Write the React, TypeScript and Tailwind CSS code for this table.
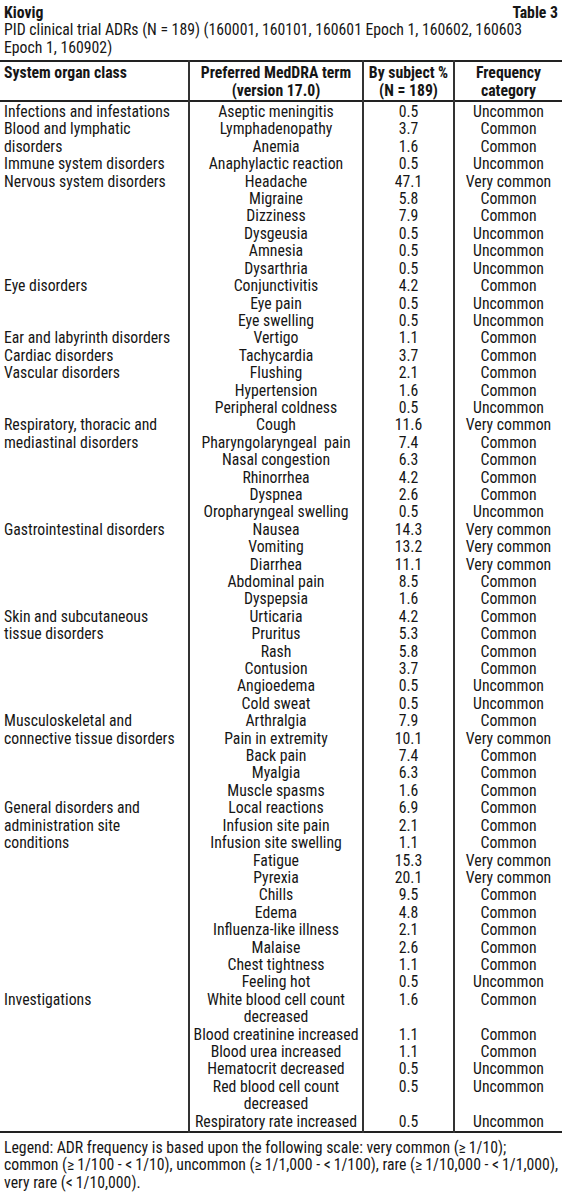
type Term = { term: string[]; pct: string; freq: string };
type Group = { soc: string[]; terms: Term[] };

const C = "Common";
const U = "Uncommon";
const V = "Very common";

const t = (term: string | string[], pct: string, freq: string): Term => ({
  term: Array.isArray(term) ? term : [term],
  pct,
  freq,
});

const groups: Group[] = [
  { soc: ["Infections and infestations"], terms: [t("Aseptic meningitis", "0.5", U)] },
  {
    soc: ["Blood and lymphatic", "disorders"],
    terms: [t("Lymphadenopathy", "3.7", C), t("Anemia", "1.6", C)],
  },
  { soc: ["Immune system disorders"], terms: [t("Anaphylactic reaction", "0.5", U)] },
  {
    soc: ["Nervous system disorders"],
    terms: [
      t("Headache", "47.1", V),
      t("Migraine", "5.8", C),
      t("Dizziness", "7.9", C),
      t("Dysgeusia", "0.5", U),
      t("Amnesia", "0.5", U),
      t("Dysarthria", "0.5", U),
    ],
  },
  {
    soc: ["Eye disorders"],
    terms: [t("Conjunctivitis", "4.2", C), t("Eye pain", "0.5", U), t("Eye swelling", "0.5", U)],
  },
  { soc: ["Ear and labyrinth disorders"], terms: [t("Vertigo", "1.1", C)] },
  { soc: ["Cardiac disorders"], terms: [t("Tachycardia", "3.7", C)] },
  {
    soc: ["Vascular disorders"],
    terms: [t("Flushing", "2.1", C), t("Hypertension", "1.6", C), t("Peripheral coldness", "0.5", U)],
  },
  {
    soc: ["Respiratory, thoracic and", "mediastinal disorders"],
    terms: [
      t("Cough", "11.6", V),
      t("Pharyngolaryngeal\u00a0 pain", "7.4", C),
      t("Nasal congestion", "6.3", C),
      t("Rhinorrhea", "4.2", C),
      t("Dyspnea", "2.6", C),
      t("Oropharyngeal swelling", "0.5", U),
    ],
  },
  {
    soc: ["Gastrointestinal disorders"],
    terms: [
      t("Nausea", "14.3", V),
      t("Vomiting", "13.2", V),
      t("Diarrhea", "11.1", V),
      t("Abdominal pain", "8.5", C),
      t("Dyspepsia", "1.6", C),
    ],
  },
  {
    soc: ["Skin and subcutaneous", "tissue disorders"],
    terms: [
      t("Urticaria", "4.2", C),
      t("Pruritus", "5.3", C),
      t("Rash", "5.8", C),
      t("Contusion", "3.7", C),
      t("Angioedema", "0.5", U),
      t("Cold sweat", "0.5", U),
    ],
  },
  {
    soc: ["Musculoskeletal and", "connective tissue disorders"],
    terms: [
      t("Arthralgia", "7.9", C),
      t("Pain in extremity", "10.1", V),
      t("Back pain", "7.4", C),
      t("Myalgia", "6.3", C),
      t("Muscle spasms", "1.6", C),
    ],
  },
  {
    soc: ["General disorders and", "administration site", "conditions"],
    terms: [
      t("Local reactions", "6.9", C),
      t("Infusion site pain", "2.1", C),
      t("Infusion site swelling", "1.1", C),
      t("Fatigue", "15.3", V),
      t("Pyrexia", "20.1", V),
      t("Chills", "9.5", C),
      t("Edema", "4.8", C),
      t("Influenza-like illness", "2.1", C),
      t("Malaise", "2.6", C),
      t("Chest tightness", "1.1", C),
      t("Feeling hot", "0.5", U),
    ],
  },
  {
    soc: ["Investigations"],
    terms: [
      t(["White blood cell count", "decreased"], "1.6", C),
      t("Blood creatinine increased", "1.1", C),
      t("Blood urea increased", "1.1", C),
      t("Hematocrit decreased", "0.5", U),
      t(["Red blood cell count", "decreased"], "0.5", U),
      t("Respiratory rate increased", "0.5", U),
    ],
  },
];

function Lines({ lines }: { lines: string[] }) {
  return (
    <>
      {lines.map((line) => (
        <div key={line} className="whitespace-nowrap">
          {line}
        </div>
      ))}
    </>
  );
}

export default function App() {
  return (
    <div className="w-[562px] bg-white pt-[4px] font-['Roboto_Condensed','Roboto',sans-serif] text-[15.75px] leading-[17.4px] text-[#161616]">
      <div className="px-[4px]">
        <div className="flex items-center justify-between font-bold">
          <span>Kiovig</span>
          <span>Table 3</span>
        </div>
        <div className="whitespace-nowrap">
          PID clinical trial ADRs (N = 189) (160001, 160101, 160601 Epoch 1, 160602, 160603
        </div>
        <div>Epoch 1, 160902)</div>
      </div>

      <table className="mt-[4px] w-full table-fixed border-collapse border-y-2 border-[#222]">
        <colgroup>
          <col className="w-[189px]" />
          <col className="w-[174px]" />
          <col className="w-[91px]" />
          <col />
        </colgroup>
        <thead>
          <tr className="border-b-2 border-[#222] align-top font-bold">
            <th className="px-[4px] pt-[2px] pb-[1px] text-left font-bold">System organ class</th>
            <th className="border-l-2 border-[#333] px-0 pt-[2px] pb-[1px] text-center font-bold">
              Preferred MedDRA term
              <br />
              (version 17.0)
            </th>
            <th className="border-l-2 border-[#333] px-0 pt-[2px] pb-[1px] text-center font-bold">
              By subject %
              <br />
              (N = 189)
            </th>
            <th className="border-l-2 border-[#333] px-0 pt-[2px] pb-[1px] text-center font-bold">
              Frequency
              <br />
              category
            </th>
          </tr>
        </thead>
        <tbody>
          {groups.map((g, gi) =>
            g.terms.map((row, ri) => {
              const first = gi === 0 && ri === 0;
              const last = gi === groups.length - 1 && ri === g.terms.length - 1;
              const pad = `${first ? "pt-[1px]" : "pt-0"} ${last ? "pb-[1px]" : "pb-0"}`;
              return (
                <tr key={`${g.soc[0]}-${row.term[0]}`} className="align-top">
                  {ri === 0 && (
                    <td rowSpan={g.terms.length} className={`px-[4px] ${pad}`}>
                      <Lines lines={g.soc} />
                    </td>
                  )}
                  <td className={`border-l-2 border-[#333] px-0 text-center ${pad}`}>
                    <Lines lines={row.term} />
                  </td>
                  <td className={`border-l-2 border-[#333] px-0 text-center ${pad}`}>{row.pct}</td>
                  <td className={`border-l-2 border-[#333] px-0 text-center ${pad}`}>{row.freq}</td>
                </tr>
              );
            })
          )}
        </tbody>
      </table>

      <div className="px-[4px] pt-[6px] pb-[12px]">
        <div className="whitespace-nowrap">
          Legend: ADR frequency is based upon the following scale: very common (≥&#8201;1/10);
        </div>
        <div className="whitespace-nowrap">
          common (≥&#8201;1/100 - &lt;&#8201;1/10), uncommon (≥&#8201;1/1,000 - &lt;&#8201;1/100), rare (≥&#8201;1/10,000 - &lt;&#8201;1/1,000),
        </div>
        <div className="whitespace-nowrap">very rare (&lt;&#8201;1/10,000).</div>
      </div>
    </div>
  );
}
